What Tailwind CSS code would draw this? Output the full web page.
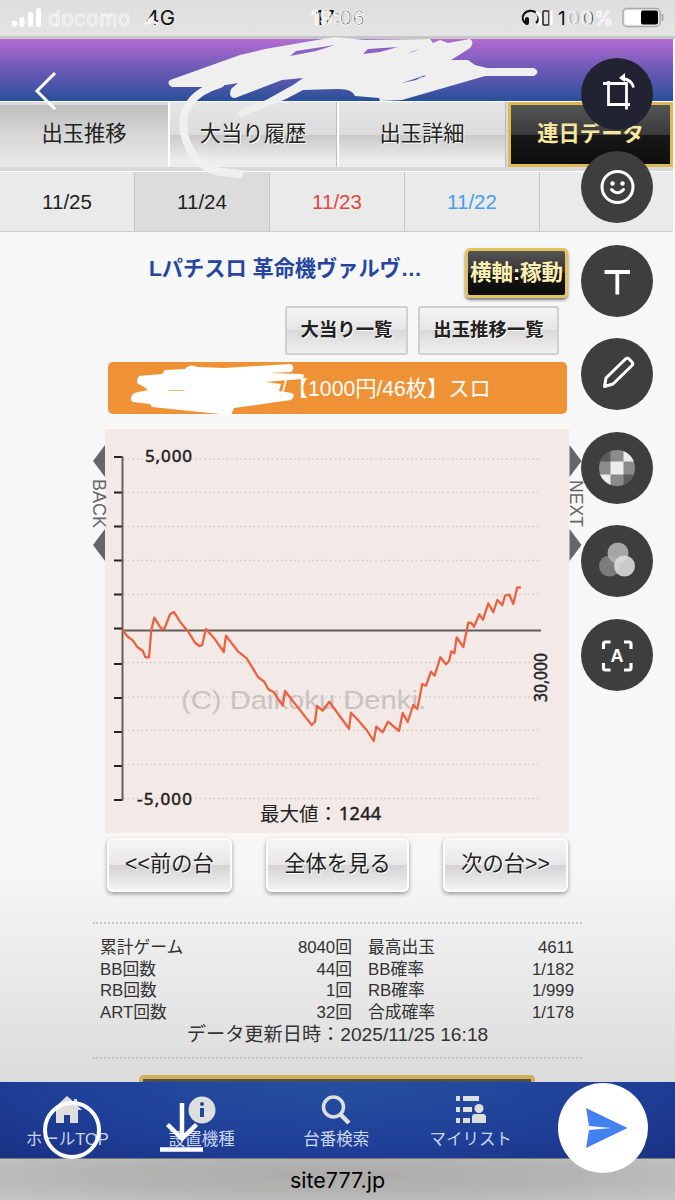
<!DOCTYPE html>
<html lang="ja">
<head>
  <meta charset="UTF-8" />
  <title>site777.jp</title>
  <script src="https://cdn.jsdelivr.net/npm/@tailwindcss/browser@4"></script>
</head>
<body class="bg-[#f7f7f7]">
  <div class="relative w-[675px] h-[1200px] overflow-hidden flex flex-col font-['Liberation_Sans','Noto_Sans_CJK_JP',sans-serif] text-[#333] whitespace-nowrap bg-linear-to-b from-[#f7f7f7] from-72% to-[#dcdcdc] to-90%">

    <!-- status bar -->
    <header class="h-[39px] shrink-0 border-b-3 border-[#c6c6c6] bg-linear-to-b from-[#dedede] to-[#e4e4e4]">
      <svg class="block font-[Inter,sans-serif]" width="675" height="36" viewBox="0 0 675 36">
        <g fill="#fff">
          <circle cx="14.500" cy="23.500" r="3" />
          <rect x="19.500" y="17" width="5" height="10" rx="2.500" />
          <rect x="28" y="12" width="5" height="15" rx="2.500" />
          <rect x="36" y="8" width="5" height="19" rx="2.500" />
        </g>
        <text x="48" y="26" font-size="20.500" textLength="82" fill="#dedede" stroke="#fafafa" stroke-width=".8">docomo</text>
        <text x="146" y="25" font-size="20.500" textLength="29" fill="#111">4G</text>
        <path d="M145 24l7-3 6 3M153 17l-5 4" stroke="#f4f4f4" stroke-width="3" fill="none" />
        <text x="315" y="25" font-size="20" textLength="50" fill="#111">17:06</text>
        <text x="311" y="25" font-size="20" textLength="54" fill="none" stroke="#fafafa" stroke-width="1.100">19:06</text>
        <path d="M527 24a8 7 0 1 1 9-1" stroke="#111" stroke-width="2.200" fill="none" />
        <rect x="525" y="17" width="4" height="8" rx="2" fill="#111" />
        <rect x="543" y="11" width="6" height="14" rx="1" fill="none" stroke="#222" stroke-width="1.500" />
        <path d="M536 12q7 5 3 13M551 11v14" stroke="#fff" stroke-width="3" fill="none" />
        <text x="558" y="25" font-size="19" textLength="36" fill="#111">100</text>
        <text x="567" y="25" font-size="19" textLength="46" fill="#e2e2e2" fill-opacity=".6" stroke="#fafafa" stroke-width=".9">00%</text>
        <rect x="623" y="8.500" width="37" height="18" rx="4" fill="#eee" stroke="#a9a9a9" stroke-width="1.500" />
        <rect x="625" y="10.500" width="17" height="14" rx="2" fill="#fff" />
        <rect x="641" y="10.500" width="17" height="14" rx="2" fill="#000" />
        <path d="M662.500 14v7" stroke="#aaa" stroke-width="2" />
      </svg>
    </header>

    <div class="h-[62px] w-[673px] shrink-0 bg-linear-to-b from-[#b36bd3] via-[#6b59b5] via-50% to-[#24509a]"></div>

    <!-- tabs -->
    <nav class="h-[70px] w-[673px] shrink-0 flex border-t border-white bg-[#d9d9d9] pb-1 text-[21.3px] text-[#222] [&>div]:flex [&>div]:items-center [&>div]:justify-center [&>div]:pt-px">
      <div class="w-[168px] pb-[3px] bg-linear-to-b from-[#bdbdbd] via-[#d8d8d8] to-[#eaeaea] border-t-3 border-[#ddd]">出玉推移</div>
      <div class="w-[169px] border-l-2 border-r border-l-white border-r-[#bbb] [text-shadow:1px_1px_#fff] bg-[linear-gradient(#e6e6e6,#dcdcdc_50%,#c9c9c9_50%,#ededed_90%)]">大当り履歴</div>
      <div class="w-[169px] border-l-2 border-r border-l-white border-r-[#bbb] [text-shadow:1px_1px_#fff] bg-[linear-gradient(#e6e6e6,#dcdcdc_50%,#c9c9c9_50%,#ededed_90%)]">出玉詳細</div>
      <div class="w-[165px] ml-[2px] border-3 border-[#dcb951] font-bold text-[#f8e7a0] bg-[linear-gradient(#555,#3a3a3a_50%,#181818_50%,#0d0d0d)]">連日データ</div>
    </nav>

    <!-- dates -->
    <nav class="h-[61px] w-[673px] shrink-0 grid grid-cols-[135px_135px_135px_135px_1fr] border-y border-t-white border-b-[#ccc] bg-[#eaeaea] text-[20.5px] leading-[59px] text-center text-[#222] [&>div]:border-r [&>div]:border-[#c6c6c6]">
      <div>11/25</div>
      <div class="bg-[#dcdcdc]">11/24</div>
      <div class="text-[#e0483f]">11/23</div>
      <div class="text-[#45a0e6]">11/22</div>
    </nav>

    <main class="w-[465px] ml-[105px] shrink-0 flex flex-col">
      <div class="flex justify-end items-start mt-4 pr-[2px]">
        <h1 class="mt-[6px] mr-[43px] text-[21.2px] leading-[30px] font-bold text-[#2546a0]">Lパチスロ 革命機ヴァルヴ…</h1>
        <div class="w-[103px] h-[50px] rounded-[5px] border-3 border-[#e3c35b] bg-[linear-gradient(#555,#333_50%,#151515_50%,#0c0c0c)] shadow-[0_2px_3px_#777] flex items-center justify-center font-bold text-[21.5px] text-[#fbf0b4]">横軸:稼動</div>
      </div>
      <div class="flex justify-end gap-[10px] mt-2 pr-[11px] font-bold text-[18.4px] text-[#222] [&>div]:h-[49px] [&>div]:flex [&>div]:items-center [&>div]:justify-center [&>div]:pb-px [&>div]:border-2 [&>div]:border-[#cfcfcf] [&>div]:rounded-[3px] [&>div]:[text-shadow:1px_1px_#fff] [&>div]:bg-[linear-gradient(#f5f5f5,#e5e5e5_50%,#d9d9d9_50%,#f0f0f0)]">
        <div class="w-[123px]">大当り一覧</div>
        <div class="w-[141px]">出玉推移一覧</div>
      </div>
      <div class="mt-[7px] ml-[3px] mr-[3px] h-[52px] rounded-[5px] bg-[#ee9235] text-white text-[21.2px] leading-[54px] pl-[173px]">/【1000円/46枚】スロ</div>

      <svg class="block mt-[15px] -ml-[20px] w-[505px] h-[404px]" viewBox="85 429 505 404">
        <rect x="105" y="429" width="464" height="404" fill="#f3eae7" />
        <g fill="#666">
          <path d="M105 445v32l-12-16zM105 529v32l-12-16zM569.500 445v32l12-16zM569.500 529v32l12-16z" />
          <text transform="translate(93 479) rotate(90)" font-size="17.500" textLength="49" lengthAdjust="spacingAndGlyphs">BACK</text>
          <text transform="translate(570 480) rotate(90)" font-size="17.500" textLength="47" lengthAdjust="spacingAndGlyphs">NEXT</text>
        </g>
        <path d="M123 459h418M123 492.500h418M123 526.500h418M123 560.500h418M123 594.500h418M123 662.500h418M123 697h418M123 730.500h418M123 764.500h418M123 798.500h418" stroke="#d8cfcc" stroke-width="1.300" stroke-dasharray="2 2.500" />
        <path d="M114 457h8.500M114 492.500h8M114 526.500h8M114 560.500h8M114 594.500h8M114 628.500h8M114 664h8M114 698h8M114 732h8M114 766h8M114 800h8.500" stroke="#222" stroke-width="1.800" />
        <path d="M122.500 456.500V800.500M122 630.500H541" stroke="#625b59" stroke-width="1.900" />
        <text x="181" y="709" font-size="26" textLength="245" lengthAdjust="spacingAndGlyphs" fill="#c9c2c0">(C) Daikoku Denki.</text>
        <polyline fill="none" stroke="#ea6241" stroke-width="2.300" stroke-linejoin="round" points="122.700,630 127,636 133,640.700 137,646.700 142.700,650.700 145.500,657.300 149,657.300 151.300,630 154.300,617.700 161,628.300 164.300,629 170,614.300 174,612 180,621.700 188.300,631.700 195,642.700 199.500,646 202,645.300 206,629 215,639.300 223.700,652 226,635.700 238.300,651.700 246.700,658.300 258.300,677.300 264.300,681.700 268.300,689.300 273.300,691.700 282.700,705.700 285,691 296,705 311.700,725 315,721.700 317,706 322.700,710.700 329.300,701.700 349,728.700 351,712.700 358,720 367.300,731 373.700,741 376.300,726.700 382.700,732.300 388,721.700 399,731 402.700,713 407.700,722 413.300,705 417.300,709 422.300,684 426,685.700 431,671.700 434.700,675.700 440.300,657.300 446,664.300 449,661.300 451.300,651.300 454.300,653.300 456.700,637.300 463.300,647 468.300,622.700 471.300,623 474,626.700 479.300,614.300 483,619.700 488.300,603.300 493.300,612.300 497.300,600 502.300,605.300 505,595.700 509.300,594.700 513.300,604 517.300,587.300 521,587.700" />
        <g fill="#222" font-family="'Noto Sans','Noto Sans CJK JP',sans-serif">
          <g stroke="#222" stroke-width=".5">
            <text x="145" y="461.500" font-size="17" textLength="47">5,000</text>
            <text x="137" y="804.500" font-size="17" textLength="55">-5,000</text>
            <text transform="translate(547 702) rotate(-90)" font-size="18" textLength="49" lengthAdjust="spacingAndGlyphs">30,000</text>
            <text x="339" y="820" font-size="18" textLength="42">1244</text>
          </g>
          <text x="260" y="821" font-size="19.500" textLength="78">最大値：</text>
        </g>
      </svg>

      <div class="flex justify-between mt-[5px] ml-[2px] mr-[2px] text-[21.3px] text-[#222] [&>div]:h-[54px] [&>div]:flex [&>div]:items-center [&>div]:justify-center [&>div]:pb-px [&>div]:border-2 [&>div]:border-[#fcfcfc] [&>div]:rounded-[6px] [&>div]:shadow-[0_2px_4px_#999] [&>div]:[text-shadow:1px_1px_#fff] [&>div]:bg-[linear-gradient(#f5f5f5,#e7e7e7_50%,#d3d3d3_50%,#f2f2f2)]">
        <div class="w-[125px]">&lt;&lt;前の台</div>
        <div class="w-[143px]">全体を見る</div>
        <div class="w-[125px]">次の台&gt;&gt;</div>
      </div>
    </main>

    <section class="w-[489px] h-[137px] shrink-0 ml-[93px] mt-[30px] border-y-2 border-dotted border-[#c6c6c6] pt-[13px] text-[16.8px] leading-[21.5px]">
      <div class="grid grid-cols-[90px_162px_92px_130px] pl-[7px] gap-x-0 [&>span:nth-child(even)]:text-right [&>span:nth-child(4n+3)]:pl-4">
        <span>累計ゲーム</span><span>8040回</span><span>最高出玉</span><span>4611</span>
        <span>BB回数</span><span>44回</span><span>BB確率</span><span>1/182</span>
        <span>RB回数</span><span>1回</span><span>RB確率</span><span>1/999</span>
        <span>ART回数</span><span>32回</span><span>合成確率</span><span>1/178</span>
      </div>
      <p class="text-[19.2px] leading-[23px] text-center">データ更新日時：2025/11/25 16:18</p>
    </section>

    <!-- top edge of the gold button hidden by the bottom menu -->
    <div class="mt-auto w-[396px] h-[7px] shrink-0 ml-[139px] rounded-t-[5px] border-4 border-b-0 border-[#d1b057] bg-[#505050]"></div>

    <nav class="h-[77px] shrink-0 bg-[radial-gradient(ellipse_at_50%_0%,#25509f,#1f3f98_60%,#1a3183)] border-b border-[#777] flex text-[16.5px] text-[#cbd5ec] [&>div]:w-[134.5px] [&>div]:flex [&>div]:flex-col [&>div]:items-center [&>div]:pt-[12px] [&_svg]:w-8 [&_svg]:h-8 [&_span]:leading-[27px]">
      <div>
        <svg viewBox="0 0 32 32" fill="#dedede"><path d="M16 2L1 16h4v13h8v-8h6v8h8V16h4l-5-5V5h-3v3z" /></svg>
        <span>ホールTOP</span>
      </div>
      <div>
        <svg viewBox="0 0 32 32"><circle cx="16" cy="16" r="13.500" fill="#dedede" /><circle cx="16" cy="10" r="2" fill="#25479b" /><path d="M14 14h4v9h-4z" fill="#25479b" /></svg>
        <span>設置機種</span>
      </div>
      <div>
        <svg viewBox="0 0 32 32" fill="none" stroke="#dedede" stroke-width="3.500"><circle cx="13.500" cy="13" r="10" /><path d="M20.500 20.500l8.500 8.500" stroke-width="4.500" /></svg>
        <span>台番検索</span>
      </div>
      <div>
        <svg viewBox="0 0 32 32" fill="#dedede"><path d="M1 2h4v5H1zM8 2h16v5H8zM1 13h4v5H1zM8 13h9v5H8zM1 24h4v5H1zM8 24h7v5H8z" /><circle cx="24" cy="14.500" r="4.500" /><path d="M17 29v-6q0-3 3-3h8q3 0 3 3v6z" /></svg>
        <span>マイリスト</span>
      </div>
    </nav>

    <footer class="h-[41px] shrink-0 bg-[radial-gradient(ellipse_at_50%_40%,#acaba9,#b4b4b4_50%,#c6c6c6)] text-center text-black text-[21.5px] leading-[42px] font-[Inter,sans-serif]">site777.jp</footer>

    <!-- pen strokes and editor marks over the page -->
    <svg class="absolute inset-0 pointer-events-none" width="675" height="1200" viewBox="0 0 675 1200" fill="none" stroke-linecap="round" stroke-linejoin="round">
      <path fill="#efefef" d="M170 80L240 55 265 49 335 37 365 40 430 39 433 43 440 40 448 43 470 39Q475 42 470 48L451 60 468 60 475 65 487 68 534 68Q541 72 534 76L485 76 402 100 380 101 379 98 355 96Q352 88 336 89L303 90 286 99 242 117Q236 115 240 110L266 100 293 85 303 78 282 80 235 98Q228 98 231 89L238 83 220 86 205 87 172 87Q166 84 170 80z" />
      <path d="M220 84C190 93 180 112 184 134C190 155 202 170 222 172L239 174" stroke="#f0f0f0" stroke-width="8" />
      <path fill="#8b62c2" d="M290 56l6-5 39-6-19 6zM363 54l5-5 30-2-18 5zM408 53l12-4-7 3z" />
      <path fill="#4a54ac" d="M402 83l12-4 10-3-8 4zM420 77l6-2-2 2z" />
      <path fill="#fff" d="M139 376Q134 384 141 385L148 390 134 393Q128 399 133 402L150 404 152 407 200 412 231 415 234 408 291 400Q296 396 292 393L279 391 281 384 265 382 302 379Q306 375 302 374L268 373 291 372Q296 368 291 364L225 368 197 367Q190 363 185 369L165 370 162 374z" />
      <path d="M169 390.500h15" stroke="#efb26f" stroke-width="1" />
      <path d="M55 73L37 91 55 109" stroke="#fff" stroke-width="3" stroke-linecap="butt" stroke-linejoin="miter" />
      <circle cx="72" cy="1130" r="27" stroke="#fff" stroke-width="4" />
      <path d="M182 1103v35M167.500 1124.500l14.500 14 14.500-14M160 1149.500h43" stroke="#fff" stroke-width="4.500" stroke-linecap="butt" stroke-linejoin="miter" />
    </svg>

    <!-- editor tools -->
    <aside class="absolute left-[581px] top-[57.5px] flex flex-col gap-[21.6px] [&>svg]:w-[72px] [&>svg]:h-[72px] [&>svg]:rounded-full [&>svg]:bg-[#3e3e3e]">
      <svg class="bg-[#222332]!" viewBox="0 0 72 72" fill="none" stroke="#fff" stroke-width="2.800">
        <path d="M22 25.500h23.500v26M27.500 23v23.500H49M41 20.500q10 1 11.500 9" />
        <path d="M38 20l6-5v9z" fill="#fff" stroke="none" />
      </svg>
      <svg viewBox="0 0 72 72" fill="none" stroke="#fff" stroke-width="3">
        <circle cx="36.500" cy="36" r="15.500" />
        <circle cx="31.500" cy="32.500" r="2.200" fill="#fff" stroke="none" /><circle cx="41.500" cy="32.500" r="2.200" fill="#fff" stroke="none" />
        <path d="M30.500 38.500q6 6.500 12 0" stroke-linecap="round" />
      </svg>
      <svg viewBox="0 0 72 72" fill="none" stroke="#fff" stroke-width="3.800"><path d="M23.500 27h25.500M36.300 27v22.500" /></svg>
      <svg viewBox="0 0 72 72" fill="none" stroke="#fff" stroke-width="3" stroke-linejoin="round"><path d="M23.500 48.500l1.500-8.500 19.500-19q2-1.500 3.500 0l3 3q1.500 1.500 0 3.500L32 46z" /></svg>
      <svg viewBox="0 0 72 72">
        <clipPath id="disc"><circle cx="36" cy="36" r="18" /></clipPath>
        <g clip-path="url(#disc)">
          <path d="M18 18h36v36H18z" fill="#8b8b8b" />
          <path d="M18 18h11.500v11.500H18zM42.500 42.500H54V54H42.500z" fill="#5c5c5c" />
          <path d="M42.500 18H54v11.500H42.500zM29.500 29.500h13v13h-13zM18 42.500h11.500V54H18z" fill="#ededed" />
        </g>
      </svg>
      <svg viewBox="0 0 72 72">
        <circle cx="28.500" cy="41" r="10.500" fill="#7c7c7c" />
        <circle cx="37" cy="28" r="10.500" fill="#b5b5b5" fill-opacity=".88" />
        <circle cx="43.500" cy="41" r="10.500" fill="#dedede" fill-opacity=".88" />
      </svg>
      <svg viewBox="0 0 72 72" fill="none" stroke="#fff" stroke-width="3.200">
        <path d="M22.500 30v-5q0-2 2-2h5M43 23h5q2 0 2 2v5M50 44v5q0 2-2 2h-5M29.500 51h-5q-2 0-2-2v-5" />
        <text x="36" y="42.500" text-anchor="middle" font-size="18" font-weight="700" fill="#fff" stroke="none">A</text>
      </svg>
    </aside>

    <svg class="absolute left-[557.5px] top-[1083px] w-[90px] h-[90px]" viewBox="0 0 90 90">
      <circle cx="45" cy="45" r="45" fill="#fff" />
      <path d="M28 25l41.500 20L28 65l3-18 22-2-22-2z" fill="#4480f0" />
    </svg>
  </div>
</body>
</html>
